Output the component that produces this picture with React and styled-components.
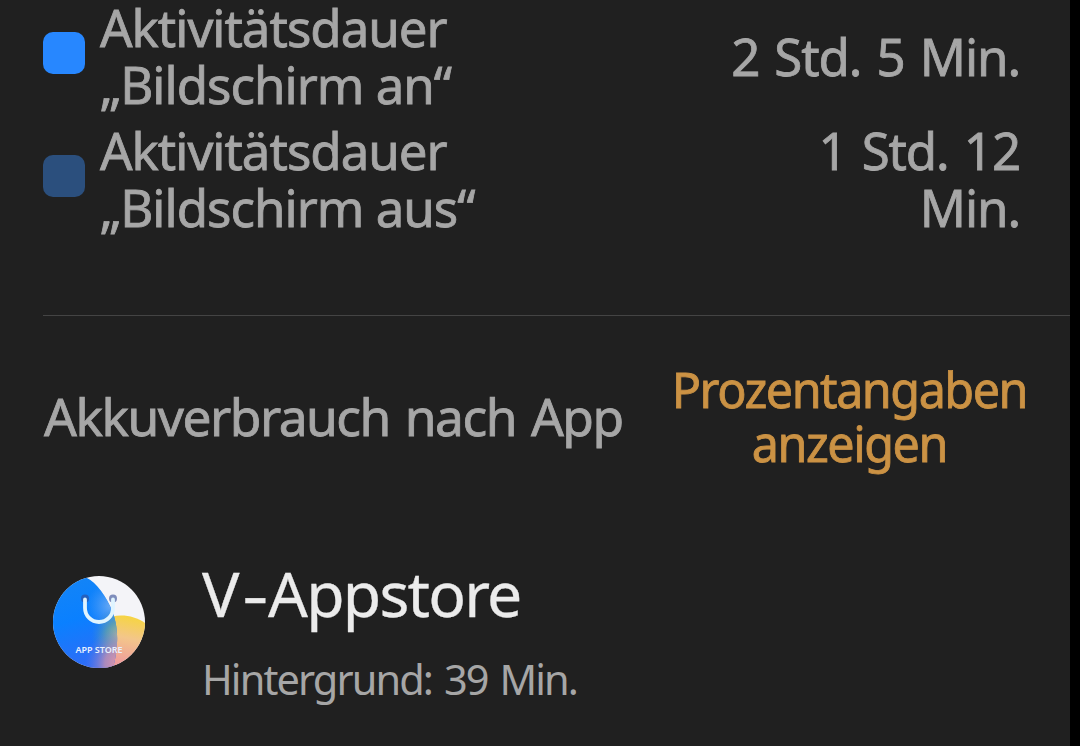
import React from 'react';
import styled, { createGlobalStyle } from 'styled-components';

const legend = [
  { id: 'on', color: '#2787ff', lines: ['Aktivitätsdauer', '„Bildschirm an“'], value: ['2 Std. 5 Min.'] },
  { id: 'off', color: '#2b4f7d', lines: ['Aktivitätsdauer', '„Bildschirm aus“'], value: ['1 Std. 12', 'Min.'] },
];

const StoreIcon = () => {
  return (
    <Icon viewBox='0 0 92 92'>
      <defs>
        <clipPath id='disc'>
          <circle cx='46' cy='46' r='46' />
        </clipPath>
        <clipPath id='wave'>
          <path d='M0 0 H29 C40 3 50 15 57 30 C66 48 66 70 60 92 H0 Z' />
        </clipPath>
        <linearGradient id='blue' x1='0' y1='0' x2='0.3' y2='1'>
          <stop offset='0' stopColor='#1585f5' />
          <stop offset='0.5' stopColor='#0a80ff' />
          <stop offset='1' stopColor='#2f6cf6' />
        </linearGradient>
        <linearGradient id='sand' x1='0.6' y1='0' x2='0.4' y2='1'>
          <stop offset='0' stopColor='#f6d443' />
          <stop offset='0.4' stopColor='#f3c68a' />
          <stop offset='1' stopColor='#ee93a0' />
        </linearGradient>
        <radialGradient id='sky' gradientUnits='userSpaceOnUse' cx='58' cy='30' r='24'>
          <stop offset='0' stopColor='#6aa9f2' />
          <stop offset='1' stopColor='#4f9bf5' stopOpacity='0' />
        </radialGradient>
        <radialGradient id='green' gradientUnits='userSpaceOnUse' cx='68' cy='60' r='30'>
          <stop offset='0' stopColor='#c9c48c' />
          <stop offset='0.5' stopColor='#64a3a8' stopOpacity='0.8' />
          <stop offset='1' stopColor='#2f88d8' stopOpacity='0' />
        </radialGradient>
        <radialGradient id='pink' gradientUnits='userSpaceOnUse' cx='68' cy='88' r='36'>
          <stop offset='0' stopColor='#ee98a2' />
          <stop offset='0.45' stopColor='#c08fb4' stopOpacity='0.85' />
          <stop offset='1' stopColor='#5c78e8' stopOpacity='0' />
        </radialGradient>
      </defs>
      <g clipPath='url(#disc)'>
        <rect width='92' height='92' fill='#f4f4f8' />
        <path d='M50 44 C62 37 80 38 92 47 V92 H40 Z' fill='url(#sand)' />
        <g clipPath='url(#wave)'>
          <rect width='92' height='92' fill='url(#blue)' />
          <rect width='92' height='92' fill='url(#sky)' />
          <rect width='92' height='92' fill='url(#green)' />
          <rect width='92' height='92' fill='url(#pink)' />
        </g>
      </g>
      <circle cx='32' cy='22.5' r='4' fill='#2560bd' />
      <circle cx='60' cy='22.5' r='4' fill='#7f8dbb' />
      <path d='M32 23.5 V32 A14 14 0 0 0 60 32 V23.5' fill='none' stroke='#dff4ff' strokeWidth='3.8' strokeLinecap='round' />
      <IconText x='46' y='77.3'>APP STORE</IconText>
    </Icon>
  );
};

const App = () => {
  return (
    <Screen>
      <GlobalStyle />
      <Legend>
        {legend.map((el) => (
          <LegendRow key={el.id}>
            <Swatch $color={el.color} />
            <Label>
              {el.lines.map((line) => (
                <Line key={line}>{line}</Line>
              ))}
            </Label>
            <Value>
              {el.value.map((line) => (
                <Line key={line}>{line}</Line>
              ))}
            </Value>
          </LegendRow>
        ))}
      </Legend>
      <Divider />
      <SectionHead>
        <SectionTitle>Akkuverbrauch nach App</SectionTitle>
        <Toggle>
          <Line>Prozentangaben</Line>
          <Line>anzeigen</Line>
        </Toggle>
      </SectionHead>
      <AppRow>
        <StoreIcon />
        <AppInfo>
          <AppName>V<Hyphen>-</Hyphen>Appstore</AppName>
          <AppUsage>Hintergrund: 39 Min.</AppUsage>
        </AppInfo>
      </AppRow>
    </Screen>
  );
};

const GlobalStyle = createGlobalStyle`
  body {
    margin: 0;
    background-color: #000;
    overflow: hidden;
  }
`;
const Screen = styled.div`
  box-sizing: border-box;
  width: 1070px;
  height: 746px;
  overflow: hidden;
  background-color: #202020;
  color: #a6a6a6;
  font-family: 'Noto Sans', sans-serif;
  white-space: nowrap;
`;
const Legend = styled.div`
  display: flex;
  flex-direction: column;
  gap: 9px;
  margin-top: -1px;
  padding: 0 50px 0 43px;
`;
const LegendRow = styled.div`
  display: flex;
  align-items: center;
  height: 114px;
`;
const Swatch = styled.div`
  width: 42px;
  height: 42px;
  margin: 0 15px 6px 0;
  border-radius: 10px;
  background-color: ${({ $color }) => $color};
`;
const Line = styled.span`
  display: block;
`;
const Label = styled.div`
  flex: 1;
  font-size: 51px;
  line-height: 57px;
  letter-spacing: -1px;
  -webkit-text-stroke: 0.8px currentColor;
`;
const Value = styled(Label)`
  text-align: right;
  letter-spacing: -1.1px;
  word-spacing: 3px;
`;
const Divider = styled.div`
  height: 1px;
  margin: 79px 0 0 43px;
  background-color: #444;
`;
const SectionHead = styled.div`
  display: flex;
  align-items: center;
  justify-content: space-between;
  height: 108px;
  margin-top: 46px;
  padding: 0 43px 0 44px;
`;
const SectionTitle = styled.div`
  font-size: 51.5px;
  letter-spacing: -1.5px;
  word-spacing: 3px;
  -webkit-text-stroke: 0.8px currentColor;
`;
const Toggle = styled.div`
  font-size: 48.5px;
  line-height: 54px;
  letter-spacing: -1.5px;
  text-align: center;
  color: #cb9244;
  -webkit-text-stroke: 0.8px currentColor;
`;
const AppRow = styled.div`
  display: flex;
  align-items: flex-start;
  margin-top: 81px;
  padding-left: 53px;
`;
const Icon = styled.svg`
  width: 92px;
  height: 92px;
  margin: 25px 57px 0 0;
`;
const IconText = styled.text`
  font-family: 'Noto Sans', sans-serif;
  font-size: 9px;
  font-weight: 600;
  fill: #e8f0ff;
  text-anchor: middle;
`;
const AppInfo = styled.div`
  display: flex;
  flex-direction: column;
  gap: 14px;
`;
const AppName = styled.div`
  font-size: 62.5px;
  line-height: 84px;
  letter-spacing: -1.8px;
  color: #ebebeb;
  -webkit-text-stroke: 0.3px currentColor;
`;
const Hyphen = styled.span`
  display: inline-block;
  margin: 0 5px 0 7px;
  transform: scaleX(1.3);
`;
const AppUsage = styled.div`
  font-size: 41.5px;
  line-height: 60px;
  letter-spacing: -1.9px;
  word-spacing: 3px;
`;

export default App;
